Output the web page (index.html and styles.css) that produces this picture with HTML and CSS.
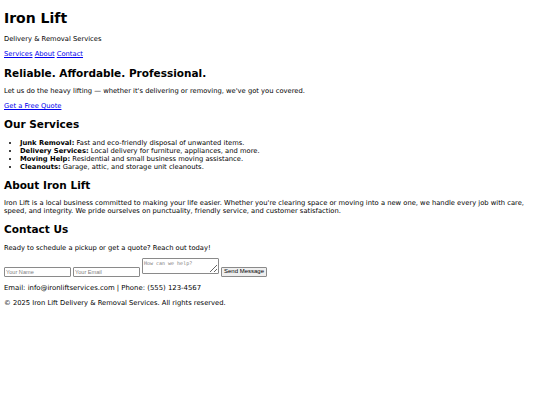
FILE: index.html
```html
<!DOCTYPE html>
<html lang="en">
<head>
<meta charset="utf-8">
<title>Iron Lift</title>
<link rel="stylesheet" href="styles.css">
</head>
<body>
<header>
  <h1>Iron Lift</h1>
  <p>Delivery &amp; Removal Services</p>
  <nav class="nav"><a href="#services">Services</a> <a href="#about">About</a> <a href="#contact">Contact</a></nav>
</header>
<section class="hero">
  <h2>Reliable. Affordable. Professional.</h2>
  <p>Let us do the heavy lifting — whether it's delivering or removing, we've got you covered.</p>
  <p><a href="#contact">Get a Free Quote</a></p>
</section>
<section id="services">
  <h2>Our Services</h2>
  <ul class="services">
    <li><strong>Junk Removal:</strong> Fast and eco-friendly disposal of unwanted items.</li>
    <li><strong>Delivery Services:</strong> Local delivery for furniture, appliances, and more.</li>
    <li><strong>Moving Help:</strong> Residential and small business moving assistance.</li>
    <li><strong>Cleanouts:</strong> Garage, attic, and storage unit cleanouts.</li>
  </ul>
</section>
<section id="about">
  <h2>About Iron Lift</h2>
  <p>Iron Lift is a local business committed to making your life easier. Whether you're clearing space or moving into a new one, we handle every job with care, speed, and integrity. We pride ourselves on punctuality, friendly service, and customer satisfaction.</p>
</section>
<section id="contact">
  <h2>Contact Us</h2>
  <p>Ready to schedule a pickup or get a quote? Reach out today!</p>
  <form class="contact-form">
    <input class="field" type="text" placeholder="Your Name">
    <input class="field" type="email" placeholder="Your Email">
    <textarea class="message" placeholder="How can we help?"></textarea>
    <button class="send" type="button">Send Message</button>
  </form>
  <p class="contact-info">Email: info@ironliftservices.com | Phone: (555) 123-4567</p>
</section>
<footer>
  <p class="copyright">© 2025 Iron Lift Delivery &amp; Removal Services. All rights reserved.</p>
</footer>
</body>
</html>
```

FILE: styles.css
```css
html {
  background: #fff;
}
body {
  margin: 0;
  padding: 0 4px 4px;
  font-family: "DejaVu Sans", Verdana, sans-serif;
  font-size: 6.75px;
  line-height: 8px;
  color: #000;
}
a {
  color: #0000ee;
}
h1 {
  font-size: 14px;
  line-height: 16px;
  margin: 10px 0 9.4px;
}
h2 {
  font-size: 10.5px;
  line-height: 12px;
  margin: 8.3px 0;
}
p {
  margin: 7px 0;
}
.nav {
  margin: 7px 0;
}
.services {
  margin: 7px 0;
  padding-left: 16px;
}
.contact-form {
  display: flex;
  align-items: flex-end;
  gap: 2px;
  margin: -1px 0 0;
}
.field {
  box-sizing: border-box;
  width: 67px;
  height: 10px;
  margin: 0;
  padding: 0 1px;
  border: 1px solid #8a8a8a;
  border-radius: 1px;
  font-family: "Liberation Sans", Arial, sans-serif;
  font-size: 5.6px;
}
.field::placeholder,
.message::placeholder {
  color: #808080;
}
.message {
  box-sizing: border-box;
  width: 77px;
  height: 16px;
  margin: 0 0 3px;
  padding: 1px;
  border: 1px solid #8a8a8a;
  border-radius: 1px;
  font-family: "DejaVu Sans Mono", monospace;
  font-size: 5px;
  line-height: 6px;
  resize: vertical;
}
.send {
  box-sizing: border-box;
  height: 10px;
  margin: 0;
  padding: 0 2px;
  border: 1px solid #8a8a8a;
  border-radius: 1px;
  background: #efefef;
  font-family: "Liberation Sans", Arial, sans-serif;
  font-size: 6px;
  line-height: 7px;
  white-space: nowrap;
  color: #000;
}
.contact-info {
  font-size: 6.9px;
}
.copyright {
  margin-top: 6px;
}
```
